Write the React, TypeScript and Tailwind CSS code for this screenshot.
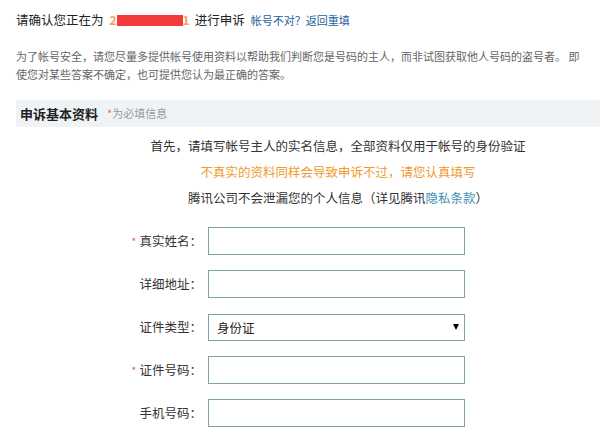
import React from 'react'

const cjk = "font-['Noto_Sans_CJK_SC','Noto_Sans',sans-serif]"

function Row({
  label,
  required,
  children,
}: {
  label: string
  required?: boolean
  children: React.ReactNode
}) {
  return (
    <div className="flex h-[28px] items-center">
      <div className="flex w-[192px] items-center justify-end pr-[6px] text-[12.5px] text-[#333]">
        {required && <span className="mr-[3px] text-[11px] text-[#e07070]">*</span>}
        <span>{label}：</span>
      </div>
      {children}
    </div>
  )
}

function TextInput() {
  return (
    <input
      type="text"
      className="h-[28px] w-[257px] border border-[#7fa3a6] bg-white px-2 text-[12.5px] outline-none"
    />
  )
}

export default function App() {
  return (
    <div className={`h-[438px] w-[600px] overflow-hidden bg-white pl-4 ${cjk}`}>
      {/* ── 顶部提示 ── */}
      <div className="mt-[10px] flex h-[20px] items-center text-[12.5px] text-[#222]">
        <span>请确认您正在为</span>
        <span className="ml-[6px] flex items-center">
          <span className="text-[12px] font-bold leading-none text-[#f5a25d]">2</span>
          <span className="h-[11px] w-[66px] bg-[#f53a3a]" />
          <span className="text-[12px] font-bold leading-none text-[#f5a25d]">1</span>
        </span>
        <span className="ml-[5px]">进行申诉</span>
        <span className="ml-[6px] text-[11px] text-[#25609e]">帐号不对？返回重填</span>
      </div>

      <p className="mt-[17px] pr-[20px] text-[11px] leading-[18px] text-[#666]">
        为了帐号安全，请您尽量多提供帐号使用资料以帮助我们判断您是号码的主人，而非试图获取他人号码的盗号者。 即使您对某些答案不确定，也可提供您认为最正确的答案。
      </p>

      {/* ── 申诉基本资料 ── */}
      <div className="mt-[17px] flex h-[27px] items-center bg-[#f0f3f6] pl-[4px]">
        <span className="text-[13px] font-bold text-[#222]">申诉基本资料</span>
        <span className="ml-[9px] text-[11px] text-[#999]">
          <span className="text-[#e07070]">*</span>为必填信息
        </span>
      </div>

      <div className="mt-[6px] pl-[60px] text-center text-[12.5px] leading-[26px]">
        <div className="text-[#333]">首先，请填写帐号主人的实名信息，全部资料仅用于帐号的身份验证</div>
        <div className="text-[#ef9a2c]">不真实的资料同样会导致申诉不过，请您认真填写</div>
        <div className="text-[#333]">
          腾讯公司不会泄漏您的个人信息（详见腾讯<span className="text-[#3b8db5]">隐私条款</span>）
        </div>
      </div>

      {/* ── 表单 ── */}
      <div className="mt-[16px] flex flex-col gap-[15px]">
        <Row label="真实姓名" required>
          <TextInput />
        </Row>
        <Row label="详细地址">
          <TextInput />
        </Row>
        <Row label="证件类型">
          <div className="relative h-[27px] w-[257px]">
            <select className="h-full w-full appearance-none border border-[#7fa3a6] bg-white pl-[8px] text-[12.5px] text-[#222] outline-none">
              <option>身份证</option>
            </select>
            <span className="pointer-events-none absolute right-[6px] top-1/2 h-0 w-0 -translate-y-1/2 border-x-[3.5px] border-t-[6px] border-x-transparent border-t-black" />
          </div>
        </Row>
        <Row label="证件号码" required>
          <TextInput />
        </Row>
        <Row label="手机号码">
          <TextInput />
        </Row>
      </div>
    </div>
  )
}
